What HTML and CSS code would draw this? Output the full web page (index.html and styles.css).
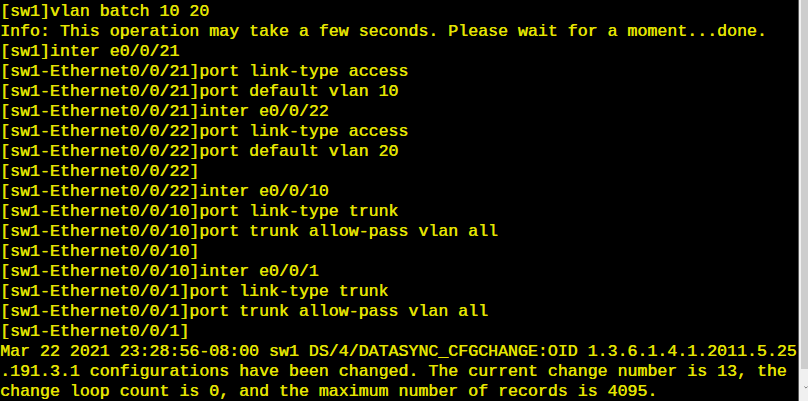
FILE: index.html
```html
<!DOCTYPE html>
<html>
<head>
<meta charset="utf-8">
<link rel="stylesheet" href="styles.css">
</head>
<body>
<div class="window">
<div class="console"><pre class="output">[sw1]vlan batch 10 20
Info: This operation may take a few seconds. Please wait for a moment...done.
[sw1]inter e0/0/21
[sw1-Ethernet0/0/21]port link-type access
[sw1-Ethernet0/0/21]port default vlan 10
[sw1-Ethernet0/0/21]inter e0/0/22
[sw1-Ethernet0/0/22]port link-type access
[sw1-Ethernet0/0/22]port default vlan 20
[sw1-Ethernet0/0/22]
[sw1-Ethernet0/0/22]inter e0/0/10
[sw1-Ethernet0/0/10]port link-type trunk
[sw1-Ethernet0/0/10]port trunk allow-pass vlan all
[sw1-Ethernet0/0/10]
[sw1-Ethernet0/0/10]inter e0/0/1
[sw1-Ethernet0/0/1]port link-type trunk
[sw1-Ethernet0/0/1]port trunk allow-pass vlan all
[sw1-Ethernet0/0/1]
Mar 22 2021 23:28:56-08:00 sw1 DS/4/DATASYNC_CFGCHANGE:OID 1.3.6.1.4.1.2011.5.25
.191.3.1 configurations have been changed. The current change number is 13, the
change loop count is 0, and the maximum number of records is 4095.</pre></div>
<div class="scrollbar">
<div class="thumb"></div>
<div class="track"></div>
<div class="button"><svg class="arrow" width="10" height="7" viewBox="0 0 10 7"><path d="M1 1 L5 5 L9 1" fill="none" stroke="#606060" stroke-width="2"/></svg></div>
</div>
</div>
</body>
</html>
```
FILE: styles.css
```css
html, body {
  margin: 0;
  padding: 0;
  background: #000;
  overflow: hidden;
}
.window {
  display: flex;
  width: 808px;
  height: 401px;
}
.console {
  width: 798px;
  height: 401px;
  background: #000;
  overflow: hidden;
}
.output {
  margin: 0;
  padding: 2px 0 0 0;
  font-family: "Liberation Mono", "Courier New", monospace;
  font-size: 16.6px;
  line-height: 20px;
  font-weight: normal;
  color: #e4e400;
  text-shadow: 0.4px 0 0 #e4e400;
  white-space: pre;
}
.scrollbar {
  width: 10px;
  height: 401px;
  display: flex;
  flex-direction: column;
  box-sizing: border-box;
  border-left: 1px solid #5a5a5a;
  background: #f0f0f0;
}
.thumb {
  height: 369px;
  margin-left: 2px;
  background: #cdcdcd;
}
.track {
  flex: 1;
}
.button {
  height: 22px;
  display: flex;
  align-items: flex-start;
  padding-left: 5px;
}
.arrow {
  display: block;
  margin-top: 5px;
}
```
